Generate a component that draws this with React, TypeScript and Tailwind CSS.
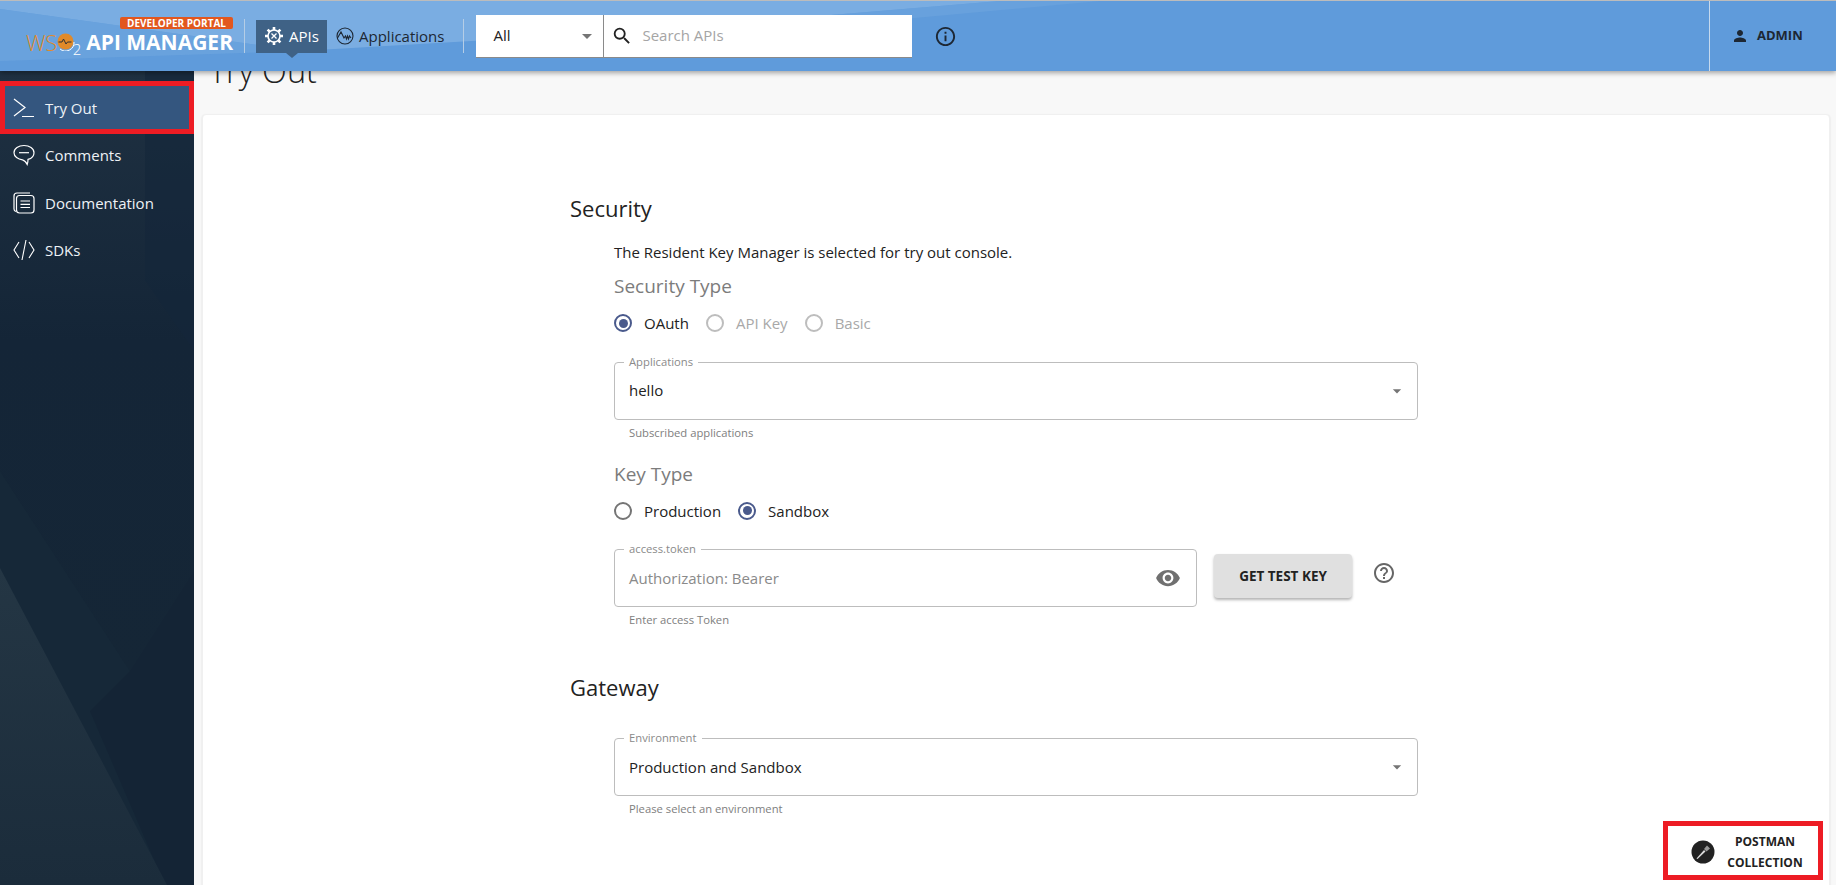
import { MdArrowDropDown, MdHelpOutline, MdInfoOutline, MdPerson, MdSearch, MdVisibility } from "react-icons/md"

function GearIcon() {
  return (
    <svg width="20" height="20" viewBox="0 0 20 20" fill="none" stroke="white">
      <circle cx="10" cy="10" r="6" strokeWidth="1.6" />
      <path d="M10 1v3M10 16v3M1 10h3M16 10h3M3.6 3.6l2.1 2.1M14.3 14.3l2.1 2.1M3.6 16.4l2.1-2.1M14.3 5.7l2.1-2.1" strokeWidth="2.6" />
      <path d="M7.5 7.5l5 5M12.5 7.5l-5 5" strokeWidth="1.3" />
    </svg>
  )
}

function AppsIcon() {
  return (
    <svg width="18" height="18" viewBox="0 0 18 18" fill="none" stroke="#1d2733" strokeWidth="1.1">
      <circle cx="9" cy="9" r="8" />
      <path d="M1.500 11l3.500-6 3 6 1.500-2 1 3 1-3 1 3 1-3 1.500 2" />
    </svg>
  )
}

function PromptIcon() {
  return (
    <svg width="22" height="20" viewBox="0 0 22 20" fill="none" stroke="white" strokeWidth="1.2">
      <path d="M1 1l11 8.500L1 18M9 18.500h12" />
    </svg>
  )
}

function CommentIcon() {
  return (
    <svg width="22" height="22" viewBox="0 0 22 22" fill="none" stroke="white" strokeWidth="1.2">
      <path d="M11 1.500c5.500 0 10 3 10 7.200 0 3.200-2.600 5.800-6 6.700 0 1.600 0 3.100-.8 5-1-2.200-2.500-4-4.700-4.600C5 15.300 1 12.500 1 8.700 1 4.500 5.500 1.500 11 1.500z" />
      <path d="M6 8.700h10" />
    </svg>
  )
}

function DocsIcon() {
  return (
    <svg width="22" height="22" viewBox="0 0 22 22" fill="none" stroke="white" strokeWidth="1.2">
      <path d="M3 19.500c-1.300-.4-2-1.300-2-2.500V4c0-1.700 1-3 3-3h13" />
      <rect x="3.500" y="3.500" width="17.500" height="17.500" rx="3" />
      <path d="M7.500 9h9.500M7.500 12.300h9.500M7.500 15.500h9.500" />
    </svg>
  )
}

function CodeIcon() {
  return (
    <svg width="22" height="22" viewBox="0 0 22 22" fill="none" stroke="white" strokeWidth="1.1">
      <path d="M6 3L1 11l5 8M16 3l5 8-5 8M13 1L9 21" />
    </svg>
  )
}

function PostmanIcon() {
  return (
    <svg width="24" height="24" viewBox="0 0 24 24">
      <circle cx="12" cy="12" r="11.500" fill="#222" />
      <path d="M5.500 18.500l7.500-8.500 1.500 1.500-8 7.500z" fill="#ddd" />
      <path d="M13 9l3-3.500 3 3-3.500 3z" fill="#999" />
    </svg>
  )
}

function SideItem({ icon, label, active }: { icon: React.ReactNode; label: string; active?: boolean }) {
  return (
    <div className={`flex h-[47.5px] items-center pl-[13px] ${active ? "bg-[#34567f]" : ""}`}>
      <span className="flex w-[32px] items-center">{icon}</span>
      <span className="text-[15px] text-[#eef2f6]">{label}</span>
    </div>
  )
}

function Radio({ label, checked, disabled }: { label: string; checked?: boolean; disabled?: boolean }) {
  return (
    <div className="flex items-center">
      <span
        className={`flex h-[18px] w-[18px] items-center justify-center rounded-full border-2 ${
          checked ? "border-[#4a5a8c]" : disabled ? "border-[#bdbdbd]" : "border-[#757575]"
        }`}
      >
        {checked && <span className="h-[9px] w-[9px] rounded-full bg-[#4a5a8c]" />}
      </span>
      <span className={`ml-[12px] text-[15px] ${disabled ? "text-[#a8a8a8]" : "text-[#222]"}`}>{label}</span>
    </div>
  )
}

function OutlinedField({ label, value, placeholder, helper, widthClass }: { label: string; value?: string; placeholder?: string; helper: string; widthClass: string }) {
  return (
    <div className={widthClass}>
      <div className="relative flex h-[58px] items-center justify-between rounded border border-[#bdbdbd] pl-[14px] pr-[10px]">
        <span className="absolute left-[9px] top-[-8px] bg-white px-[5px] text-[11.250px] leading-[14px] text-[#8a8a8a]">{label}</span>
        <span className={`text-[15px] ${value ? "text-[#222]" : "text-[#8a8a8a]"}`}>{value ?? placeholder}</span>
        {value ? <MdArrowDropDown className="text-[20px] text-[#757575]" /> : <MdVisibility className="mr-[5px] text-[26px] text-[#707070]" />}
      </div>
      <p className="mt-[6px] pl-[15px] text-[11.250px] leading-[14px] text-[#7e7e7e]">{helper}</p>
    </div>
  )
}

export default function App() {
  return (
    <div className="relative flex h-screen flex-col overflow-hidden bg-[#f8f8f8] font-['Open_Sans',sans-serif]">
      <header className="relative z-10 flex h-[71px] shrink-0 items-center overflow-hidden border-t border-[#bcbcbc] bg-[#5f9bdb] shadow-[0_2px_5px_rgba(0,0,0,0.35)]">
        {/* lighter diagonal in the banner */}
        <svg className="absolute inset-0" width="1836" height="71">
          <polygon points="0,0 1000,0 640,30 300,50 0,8" fill="#7fb0e3" opacity="0.85" />
          <polygon points="0,8 300,50 0,60" fill="#6ea5de" opacity="0.7" />
          <polygon points="640,30 1000,0 1100,0 860,22" fill="#6ea5de" opacity="0.6" />
        </svg>

        <div className="relative ml-[26px] mt-[2px] flex w-[207px] flex-col items-end">
          <span className="mb-[-2px] rounded-[2px] bg-[#e2571e] px-[7px] text-[10px] font-bold leading-[12px] text-white">DEVELOPER PORTAL</span>
          <div className="flex w-full items-center justify-between">
            <div className="flex items-center">
              <span className="text-[22px] font-light leading-[26px] tracking-[-0.5px] text-[#e08a2a]">WS</span>
              <svg width="18" height="18" viewBox="0 0 18 18">
                <circle cx="8.500" cy="8.500" r="8" fill="#e08a2a" />
                <path d="M3 16a8.500 8.500 0 0 0 14-7" fill="none" stroke="white" strokeWidth="1" />
                <path d="M1.500 9h3.500l1.500-3 2.500 5 1.500-2h4" fill="none" stroke="#333" strokeWidth="1" />
              </svg>
              <span className="ml-[-2px] mt-[14px] text-[15px] font-light leading-[16px] text-white">2</span>
            </div>
            <span className="text-[21px] font-bold leading-[26px] text-white">API MANAGER</span>
          </div>
        </div>

        <div className="relative ml-[11px] h-[34px] w-px bg-[#b5cde6]" />

        <div className="relative ml-[11px] flex h-[33px] w-[71px] items-center justify-center gap-[5px] bg-[#3f6286]">
          <GearIcon />
          <span className="text-[15px] text-white">APIs</span>
          <span className="absolute bottom-[-5px] left-[30px] h-0 w-0 border-x-[6px] border-t-[5px] border-x-transparent border-t-[#3f6286]" />
        </div>
        <div className="relative ml-[9px] flex items-center gap-[5px]">
          <AppsIcon />
          <span className="text-[15px] text-[#1d2733]">Applications</span>
        </div>
        <div className="relative ml-[19px] h-[34px] w-px bg-[#b5cde6]" />

        <div className="relative ml-[12px] flex h-[43px] w-[128px] items-center justify-between border-r border-b border-[#8a8a8a] bg-white pl-[17px] pr-[4px]">
          <span className="text-[15px] text-[#222]">All</span>
          <MdArrowDropDown className="text-[24px] text-[#757575]" />
        </div>
        <div className="relative flex h-[43px] w-[308px] items-center border-b border-[#8a8a8a] bg-white pl-[7px]">
          <MdSearch className="text-[22px] text-[#222]" />
          <span className="ml-[9px] text-[15px] text-[#a5a5a5]">Search APIs</span>
        </div>
        <MdInfoOutline className="relative ml-[22px] text-[23px] text-[#1d2733]" />

        <div className="relative ml-auto flex h-full w-[127px] items-center border-l border-[#c5d9ee] pl-[21px]">
          <MdPerson className="text-[18px] text-[#1d2733]" />
          <span className="ml-[8px] text-[13px] font-bold text-[#1d2733]">ADMIN</span>
        </div>
      </header>

      <div className="flex min-h-0 flex-1">
        <aside className="relative w-[194px] shrink-0 overflow-hidden">
          {/* faint polygon art on the sidebar */}
          <svg className="absolute inset-0" width="194" height="814">
            <defs>
              <linearGradient id="sideTop" x1="0" y1="0" x2="0" y2="1">
                <stop offset="0" stopColor="#1f3142" />
                <stop offset="0.45" stopColor="#142537" />
                <stop offset="1" stopColor="#152636" />
              </linearGradient>
              <linearGradient id="sideLight" x1="0" y1="0" x2="0" y2="1">
                <stop offset="0" stopColor="#243644" />
                <stop offset="1" stopColor="#1b2c3b" />
              </linearGradient>
            </defs>
            <rect width="194" height="814" fill="#142435" />
            <polygon points="0,0 194,0 194,500 130,600 0,400" fill="url(#sideTop)" />
            <polygon points="0,400 130,600 90,640 165,814 0,814" fill="#162838" />
            <polygon points="0,497 167,814 0,814" fill="url(#sideLight)" />
            <polygon points="145,0 194,0 194,280 145,209" fill="#14263a" opacity="0.6" />
          </svg>
          <div className="relative pt-[13px]">
            <SideItem icon={<PromptIcon />} label="Try Out" active />
            <SideItem icon={<CommentIcon />} label="Comments" />
            <SideItem icon={<DocsIcon />} label="Documentation" />
            <SideItem icon={<CodeIcon />} label="SDKs" />
          </div>
        </aside>

        <main className="min-w-0 flex-1 pl-[8px] pr-[6px]">
          <h1 className="ml-[7px] mt-[-24px] h-[67px] text-[32.500px] font-light leading-[48px] text-[#222]">Try Out</h1>
          <div className="h-[800px] rounded border border-[#f0f0f0] bg-white pl-[367px] pt-[77px] shadow-[0_1px_2px_rgba(0,0,0,0.12)]">
            <h2 className="text-[22px] leading-[32px] text-[#222]">Security</h2>
            <div className="ml-[44px] w-[804px]">
              <p className="mt-[18px] text-[15px] leading-[20px] text-[#222]">The Resident Key Manager is selected for try out console.</p>
              <h3 className="mt-[11px] text-[19px] leading-[26px] text-[#7c7c7c]">Security Type</h3>
              <div className="mt-[13px] flex gap-[17px]">
                <Radio label="OAuth" checked />
                <Radio label="API Key" disabled />
                <Radio label="Basic" disabled />
              </div>
              <div className="mt-[27px]">
                <OutlinedField label="Applications" value="hello" helper="Subscribed applications" widthClass="w-[804px]" />
              </div>
              <h3 className="mt-[21px] text-[19px] leading-[26px] text-[#7c7c7c]">Key Type</h3>
              <div className="mt-[13px] flex gap-[17px]">
                <Radio label="Production" />
                <Radio label="Sandbox" checked />
              </div>
              <div className="mt-[27px] flex items-start">
                <OutlinedField label="access.token" placeholder="Authorization: Bearer" helper="Enter access Token" widthClass="w-[583px]" />
                <button className="ml-[17px] mt-[5px] h-[44px] w-[138px] rounded bg-[#e0e0e0] text-[13.500px] font-bold text-[#222] shadow-[0_2px_3px_rgba(0,0,0,0.3)]">GET TEST KEY</button>
                <MdHelpOutline className="ml-[20px] mt-[12px] text-[24px] text-[#666]" />
              </div>
            </div>
            <h2 className="mt-[44px] text-[22px] leading-[32px] text-[#222]">Gateway</h2>
            <div className="ml-[44px] mt-[35px] w-[804px]">
              <OutlinedField label="Environment" value="Production and Sandbox" helper="Please select an environment" widthClass="w-[804px]" />
            </div>
          </div>
        </main>
      </div>

      {/* red annotation boxes from the docs screenshot */}
      <div className="pointer-events-none absolute left-0 top-[81px] z-20 h-[53px] w-[194px] border-[5px] border-[#ed1c24]" />
      <div className="absolute left-[1663px] top-[821px] z-20 flex h-[59px] w-[160px] items-center justify-center gap-[12px] border-[5px] border-[#ed1c24] bg-white pl-[8px] pt-[2px]">
        <PostmanIcon />
        <span className="text-center text-[12px] font-bold leading-[21px] text-[#222]">
          POSTMAN
          <br />
          COLLECTION
        </span>
      </div>
    </div>
  )
}
